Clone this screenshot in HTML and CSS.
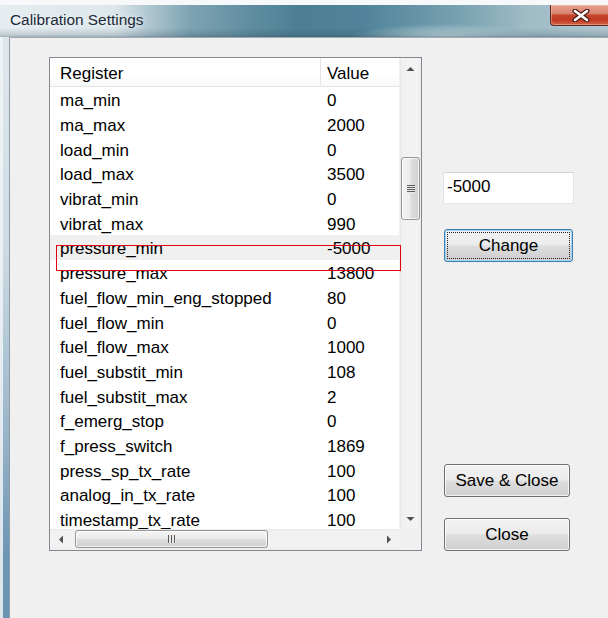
FILE: index.html
```html
<!DOCTYPE html>
<html lang="en">
<head>
<meta charset="utf-8">
<title>Calibration Settings</title>
<link rel="stylesheet" href="styles.css">
</head>
<body>
<div class="window">
  <div class="titlebar">
    <span class="title">Calibration Settings</span>
    <div class="close-btn">
      <svg width="18" height="13" viewBox="0 0 18 13">
        <path d="M3 2 L15 11 M15 2 L3 11" stroke="#4a1f18" stroke-width="5" stroke-linecap="round"/>
        <path d="M3 2 L15 11 M15 2 L3 11" stroke="#ffffff" stroke-width="2.6" stroke-linecap="round"/>
      </svg>
    </div>
  </div>
  <div class="frame-body">
    <div class="frame-edge"></div>
    <div class="client">
      <div class="listbox">
        <div class="view">
          <div class="header">
            <div class="cell reg">Register</div>
            <div class="cell val">Value</div>
          </div>
          <div class="row"><div class="cell reg">ma_min</div><div class="cell val">0</div></div>
          <div class="row"><div class="cell reg">ma_max</div><div class="cell val">2000</div></div>
          <div class="row"><div class="cell reg">load_min</div><div class="cell val">0</div></div>
          <div class="row"><div class="cell reg">load_max</div><div class="cell val">3500</div></div>
          <div class="row"><div class="cell reg">vibrat_min</div><div class="cell val">0</div></div>
          <div class="row"><div class="cell reg">vibrat_max</div><div class="cell val">990</div></div>
          <div class="row selected"><div class="cell reg">pressure_min</div><div class="cell val">-5000</div></div>
          <div class="row"><div class="cell reg">pressure_max</div><div class="cell val">13800</div></div>
          <div class="row"><div class="cell reg">fuel_flow_min_eng_stopped</div><div class="cell val">80</div></div>
          <div class="row"><div class="cell reg">fuel_flow_min</div><div class="cell val">0</div></div>
          <div class="row"><div class="cell reg">fuel_flow_max</div><div class="cell val">1000</div></div>
          <div class="row"><div class="cell reg">fuel_substit_min</div><div class="cell val">108</div></div>
          <div class="row"><div class="cell reg">fuel_substit_max</div><div class="cell val">2</div></div>
          <div class="row"><div class="cell reg">f_emerg_stop</div><div class="cell val">0</div></div>
          <div class="row"><div class="cell reg">f_press_switch</div><div class="cell val">1869</div></div>
          <div class="row"><div class="cell reg">press_sp_tx_rate</div><div class="cell val">100</div></div>
          <div class="row"><div class="cell reg">analog_in_tx_rate</div><div class="cell val">100</div></div>
          <div class="row"><div class="cell reg">timestamp_tx_rate</div><div class="cell val">100</div></div>
        </div>
        <div class="vscroll">
          <div class="arrow-btn v">
            <svg width="9" height="6" viewBox="0 0 9 6"><path d="M0.5 5 L4.5 1 L8.5 5 Z" fill="#505050"/></svg>
          </div>
          <div class="vtrack">
            <div class="vthumb"><span class="grip-h"></span></div>
          </div>
          <div class="arrow-btn v">
            <svg width="9" height="6" viewBox="0 0 9 6"><path d="M0.5 1 L4.5 5 L8.5 1 Z" fill="#505050"/></svg>
          </div>
        </div>
        <div class="hscroll">
          <div class="arrow-btn h">
            <svg width="6" height="9" viewBox="0 0 6 9"><path d="M5 0.5 L1 4.5 L5 8.5 Z" fill="#505050"/></svg>
          </div>
          <div class="htrack">
            <div class="hthumb"><span class="grip-v"></span></div>
          </div>
          <div class="arrow-btn h">
            <svg width="6" height="9" viewBox="0 0 6 9"><path d="M1 0.5 L5 4.5 L1 8.5 Z" fill="#505050"/></svg>
          </div>
        </div>
        <div class="corner"></div>
        <div class="focus-rect"></div>
      </div>
      <div class="side">
        <div class="textbox">-5000</div>
        <div class="btn default"><span class="focus">Change</span></div>
        <div class="btn save">Save &amp; Close</div>
        <div class="btn close">Close</div>
      </div>
    </div>
  </div>
</div>
</body>
</html>
```
FILE: styles.css
```css
* { box-sizing: border-box; }

html, body {
  margin: 0;
  padding: 0;
  width: 608px;
  height: 618px;
  overflow: hidden;
  background: #f0f0f0;
}

.window {
  width: 608px;
  height: 618px;
  display: flex;
  flex-direction: column;
  font-family: "Liberation Sans", Arial, sans-serif;
  color: #000;
}

/* Aero-style caption bar */
.titlebar {
  height: 37px;
  flex: none;
  display: flex;
  align-items: flex-start;
  background:
    linear-gradient(to bottom, #f6f8fa 0, #f6f8fa 5px, rgba(255,255,255,0) 5px),
    linear-gradient(to bottom, rgba(255,255,255,0) 28px, rgba(30,55,70,0.18) 35px, rgba(30,55,70,0.35) 37px),
    radial-gradient(ellipse 95px 13px at 445px 37px, rgba(205,228,232,0.9), rgba(205,228,232,0) 100%),
    linear-gradient(to right, #e6edf1 0, #dce6eb 115px, #adc5cf 150px, #7ea3b3 190px, #5d8c9f 255px, #4c7f93 300px, #51849a 365px, #76a0af 455px, #9fbbc6 525px, #b3c9d2 608px);
}

.title {
  margin: 11px 0 0 10px;
  font-size: 15.4px;
  line-height: 18px;
  color: #1b2a38;
  text-shadow: 0 0 6px rgba(255,255,255,0.9);
}

.close-btn {
  margin: 5px -4px 0 auto;
  width: 62px;
  height: 21px;
  border: 1px solid #5b2a20;
  border-top: none;
  border-radius: 0 0 4px 4px;
  background: linear-gradient(to bottom, #e6a291 0%, #d98470 42%, #c6442c 52%, #c13a22 75%, #d1654b 100%);
  box-shadow: inset 0 0 0 1px rgba(255,200,180,0.45);
  display: flex;
  justify-content: flex-start;
  align-items: center;
  padding-left: 21px;
}

.close-btn svg { display: block; }

.frame-body {
  flex: 1;
  display: flex;
}

.frame-edge {
  width: 9px;
  flex: none;
  background:
    linear-gradient(to right, rgba(240,244,247,0.85) 0, rgba(240,244,247,0.85) 3px, rgba(240,244,247,0) 3px),
    linear-gradient(to bottom, #dfe7ec 0%, #cfdce5 35%, #9fb9cc 65%, #6f97b5 88%, #6a93b2 100%);
}

.client {
  flex: 1;
  display: flex;
  align-items: flex-start;
  border-top: 1px solid #9ea9b1;
  border-left: 1px solid #8f9ca5;
  padding: 19px 0 0 39px;
  background: #f0f0f0;
}

/* List view */
.listbox {
  position: relative;
  width: 373px;
  height: 494px;
  border: 1px solid #828790;
  background: #fff;
  display: grid;
  grid-template-columns: 349px 22px;
  grid-template-rows: 471px 21px;
}

.view {
  overflow: hidden;
  font-size: 17px;
}

.header {
  height: 29px;
  display: flex;
  border-bottom: 1px solid #e5e5e5;
  background: linear-gradient(to bottom, #ffffff 0, #ffffff 60%, #f7f8f9 100%);
}

.header .cell {
  height: 28px;
  line-height: 31px;
}

.header .reg { border-right: 1px solid #e5e5e5; }

.row {
  height: 24.7px;
  display: flex;
  align-items: center;
}

.row .cell { padding-top: 4px; }

.row.selected { background: #f0f0f0; }

.cell.reg {
  width: 271px;
  flex: none;
  padding-left: 10px;
  white-space: nowrap;
}

.cell.val {
  flex: 1;
  padding-left: 6px;
  white-space: nowrap;
}

.focus-rect {
  position: absolute;
  left: 6px;
  top: 187px;
  width: 345px;
  height: 26px;
  border: 1px solid #e3000f;
  pointer-events: none;
}

/* Scroll bars */
.vscroll {
  display: flex;
  flex-direction: column;
  background: linear-gradient(to right, #e6e6e6 0, #f1f1f1 2px, #f3f3f3 80%, #ececec 100%);
  border-left: 1px solid #f0f0f0;
}

.arrow-btn {
  display: flex;
  align-items: center;
  justify-content: center;
  flex: none;
}

.arrow-btn.v { height: 21px; }
.arrow-btn.h { width: 21px; }

.vtrack {
  flex: 1;
  padding: 78px 0 0 1px;
}

.vthumb {
  width: 19px;
  height: 63px;
  border: 1px solid #979797;
  border-radius: 3px;
  background: linear-gradient(to right, #f4f4f4 0, #ececec 45%, #dcdcdc 55%, #d2d2d2 100%);
  box-shadow: inset 0 0 0 1px rgba(255,255,255,0.7);
  display: flex;
  align-items: center;
  justify-content: center;
}

.grip-h {
  width: 8px;
  height: 8px;
  background: repeating-linear-gradient(to bottom, #5d5d5d 0, #5d5d5d 1px, #e8e8e8 1px, #e8e8e8 2px);
}

.hscroll {
  display: flex;
  background: linear-gradient(to bottom, #e6e6e6 0, #f1f1f1 2px, #f3f3f3 80%, #ececec 100%);
}

.htrack {
  flex: 1;
  padding: 1px 0 0 4px;
}

.hthumb {
  width: 193px;
  height: 18px;
  border: 1px solid #979797;
  border-radius: 3px;
  background: linear-gradient(to bottom, #f4f4f4 0, #ececec 45%, #dcdcdc 55%, #d2d2d2 100%);
  box-shadow: inset 0 0 0 1px rgba(255,255,255,0.7);
  display: flex;
  align-items: center;
  justify-content: center;
}

.grip-v {
  width: 8px;
  height: 8px;
  background: repeating-linear-gradient(to right, #5d5d5d 0, #5d5d5d 1px, #e8e8e8 1px, #e8e8e8 3px);
}

.corner { background: #f0f0f0; }

/* Right-hand controls */
.side {
  height: 494px;
  margin-left: 21px;
  display: flex;
  flex-direction: column;
  align-items: flex-start;
}

.textbox {
  margin-top: 115px;
  width: 131px;
  height: 32px;
  background: #fff;
  border: 1px solid #e2e6ea;
  border-top-color: #cfd6dc;
  font-size: 17px;
  line-height: 27px;
  padding-left: 3px;
}

.btn {
  margin-left: 1px;
  height: 33px;
  border: 1px solid #707070;
  border-radius: 3px;
  background: linear-gradient(to bottom, #f2f2f2 0, #ebebeb 48%, #dddddd 52%, #cfcfcf 100%);
  box-shadow: inset 0 0 0 1px rgba(255,255,255,0.75);
  font-size: 17px;
  display: flex;
  align-items: center;
  justify-content: center;
}

.btn.default {
  margin-top: 25px;
  width: 129px;
  border-color: #3c7fb1;
  box-shadow: inset 0 0 0 1px #9fd5f3;
  padding: 3px;
}

.btn.default .focus {
  flex: 1;
  align-self: stretch;
  display: flex;
  align-items: center;
  justify-content: center;
  padding-top: 1px;
  outline: 1px dotted #222;
  outline-offset: 0;
}

.btn.save {
  margin-top: auto;
  width: 126px;
}

.btn.close {
  margin-top: 21px;
  width: 126px;
}
```
